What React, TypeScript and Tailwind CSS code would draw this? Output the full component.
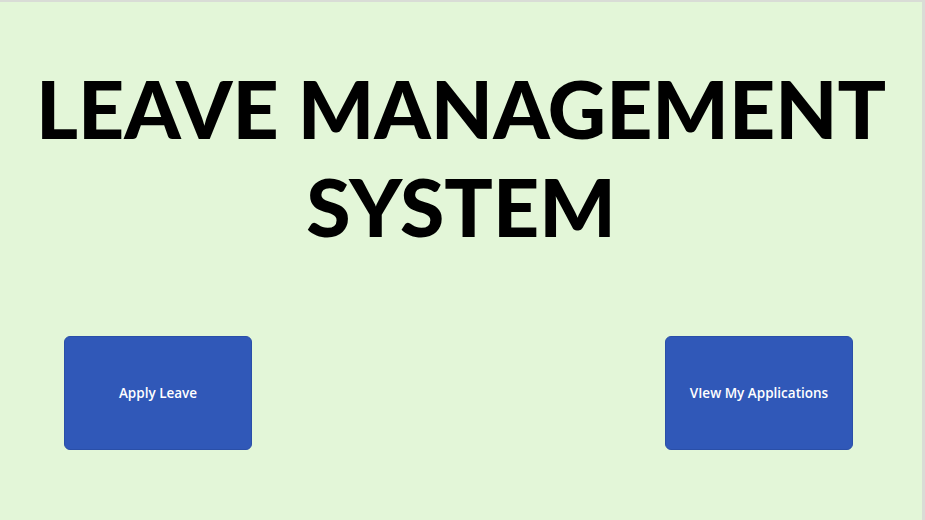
export default function App() {
  const btn =
    "w-[188px] h-[114px] rounded-[6px] bg-[#3058b8] border border-[#2a4fa8] text-white text-[13.5px] font-semibold font-['Open_Sans',sans-serif] flex items-center justify-center";
  return (
    <div className="w-[925px] h-[520px] bg-[#e3f6d8] border-t-2 border-r-[3px] border-[#d9dcd6] flex flex-col overflow-hidden">
      <h1 className="mt-[57px] text-center text-[80.5px] leading-[98px] font-black text-black font-['Lato',sans-serif]">
        LEAVE MANAGEMENT
        <br />
        SYSTEM
      </h1>
      <div className="mt-[81px] flex justify-between pl-[64px] pr-[69px]">
        <button className={btn}>Apply Leave</button>
        <button className={btn}>VIew My Applications</button>
      </div>
    </div>
  );
}
